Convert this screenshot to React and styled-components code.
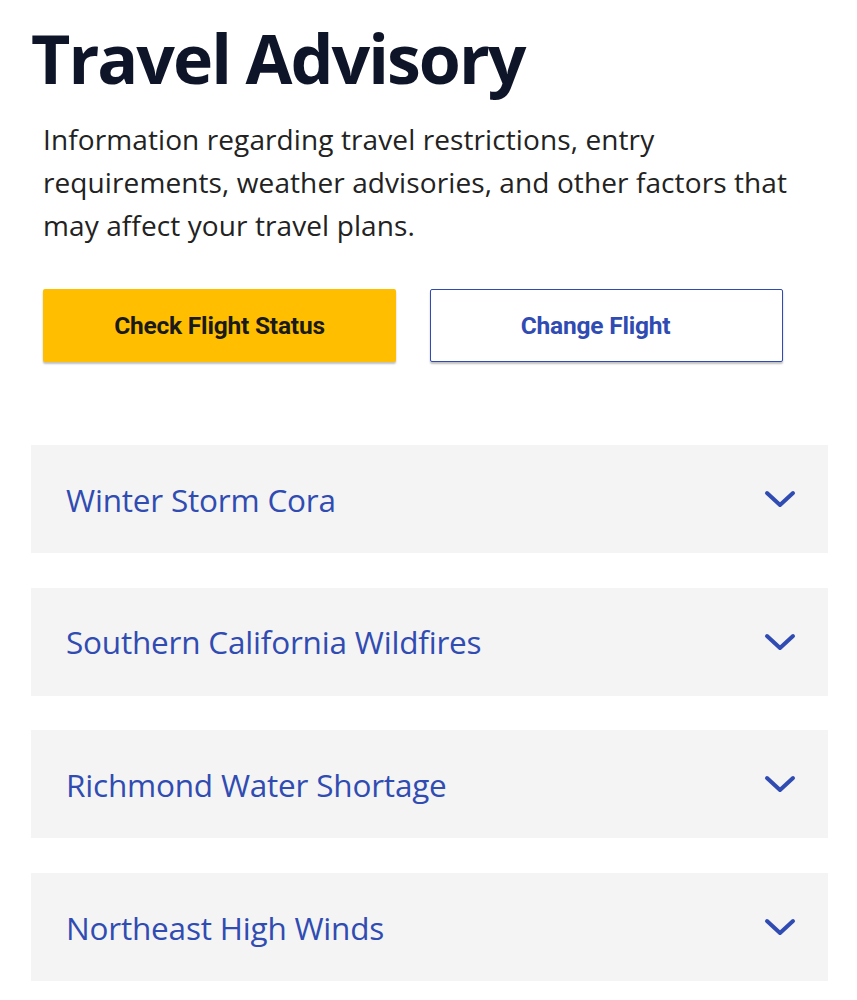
import styled, { createGlobalStyle } from 'styled-components';

const GlobalStyle = createGlobalStyle`
    body {
        margin: 0;
        background: #fff;
        font-family: "Open Sans", "Liberation Sans", sans-serif;
    }
`;

const advisories = [
    'Winter Storm Cora',
    'Southern California Wildfires',
    'Richmond Water Shortage',
    'Northeast High Winds',
];

function Chevron(){
    return (
        <svg width="32" height="20" viewBox="0 0 32 20" fill="none">
            <path d="M3 4 L16 16 L29 4" stroke="#304CB2" strokeWidth="4" strokeLinecap="round" strokeLinejoin="round" />
        </svg>
    );
}

export default function App(){
    return (
        <Page>
            <GlobalStyle />
            <Title>Travel Advisory</Title>
            <Intro>
                Information regarding travel restrictions, entry requirements, weather advisories, and other factors that may affect your travel plans.
            </Intro>
            <Actions>
                <Button primary>Check Flight Status</Button>
                <Button>Change Flight</Button>
            </Actions>
            <List>
                {advisories.map((name) => (
                    <Item key={name}>
                        <ItemTitle>{name}</ItemTitle>
                        <Chevron />
                    </Item>
                ))}
            </List>
        </Page>
    );
}

const Page = styled.div`
    padding: 12px 29px 20px 31px;
`;

const Title = styled.h1`
    margin: 0;
    font-size: 68px;
    font-weight: 700;
    color: #0f1528;
    letter-spacing: -2px;
    line-height: 92px;
`;

const Intro = styled.p`
    margin: 14px 0 0 12px;
    max-width: 770px;
    font-size: 28px;
    line-height: 43px;
    color: #222;
    letter-spacing: 0.1px;
`;

const Actions = styled.div`
    display: flex;
    gap: 34px;
    margin: 42px 0 0 12px;
`;

const Button = styled.button`
    width: 353px;
    height: 73px;
    border-radius: 2px;
    font-family: Roboto, "Liberation Sans", sans-serif;
    font-weight: 700;
    font-size: 24.5px;
    letter-spacing: -0.2px;
    cursor: pointer;
    padding: ${(p) => (p.primary ? '0' : '0 22px 0 0')};
    background: ${(p) => (p.primary ? '#FFBF00' : '#fff')};
    color: ${(p) => (p.primary ? '#1a1a1a' : '#304CB2')};
    border: ${(p) => (p.primary ? 'none' : '1.5px solid #304CB2')};
    box-shadow: 0 2px 2px rgba(0, 0, 0, 0.25);
`;

const List = styled.div`
    display: flex;
    flex-direction: column;
    gap: 34.7px;
    margin-top: 83px;
`;

const Item = styled.div`
    display: flex;
    align-items: center;
    justify-content: space-between;
    height: 108px;
    padding: 0 32px 0 35px;
    background: #f4f4f4;
`;

const ItemTitle = styled.span`
    font-size: 31.5px;
    color: #304CB2;
    letter-spacing: -0.2px;
`;
